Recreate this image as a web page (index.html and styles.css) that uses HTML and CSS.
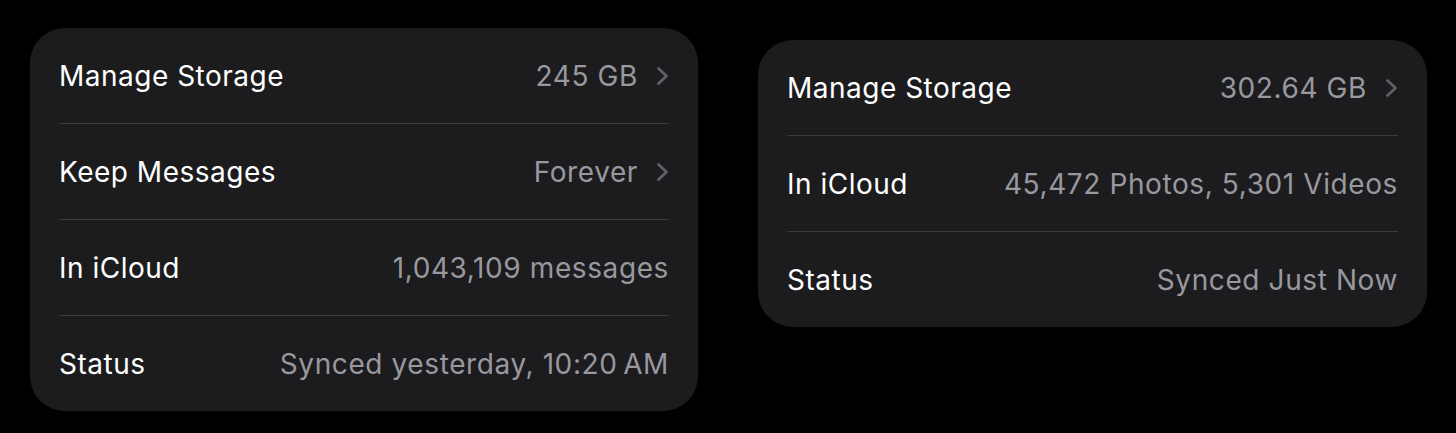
FILE: index.html
```html
<!DOCTYPE html>
<html lang="en">

<head>
    <meta charset="UTF-8">
    <title>iCloud Settings</title>
    <link rel="stylesheet" href="styles.css">
</head>

<body>
    <div class="page">
        <div class="card card-messages">
            <div class="row">
                <span class="label">Manage Storage</span>
                <span class="value">245 GB<span class="chevron"><svg width="13" height="20" viewBox="0 0 13 20"><path d="M2.5 2.5 L10.5 10 L2.5 17.5" fill="none" stroke="currentColor" stroke-width="2.7" stroke-linecap="round" stroke-linejoin="round"/></svg></span></span>
            </div>
            <div class="row">
                <span class="label">Keep Messages</span>
                <span class="value">Forever<span class="chevron"><svg width="13" height="20" viewBox="0 0 13 20"><path d="M2.5 2.5 L10.5 10 L2.5 17.5" fill="none" stroke="currentColor" stroke-width="2.7" stroke-linecap="round" stroke-linejoin="round"/></svg></span></span>
            </div>
            <div class="row">
                <span class="label">In iCloud</span>
                <span class="value">1,043,109 messages</span>
            </div>
            <div class="row">
                <span class="label">Status</span>
                <span class="value">Synced yesterday, 10:20&#8201;AM</span>
            </div>
        </div>

        <div class="card card-photos">
            <div class="row">
                <span class="label">Manage Storage</span>
                <span class="value">302.64 GB<span class="chevron"><svg width="13" height="20" viewBox="0 0 13 20"><path d="M2.5 2.5 L10.5 10 L2.5 17.5" fill="none" stroke="currentColor" stroke-width="2.7" stroke-linecap="round" stroke-linejoin="round"/></svg></span></span>
            </div>
            <div class="row">
                <span class="label">In iCloud</span>
                <span class="value">45,472 Photos, 5,301 Videos</span>
            </div>
            <div class="row">
                <span class="label">Status</span>
                <span class="value">Synced Just Now</span>
            </div>
        </div>
    </div>
</body>

</html>
```

FILE: styles.css
```css
body {
    margin: 0;
    background: #000;
    font-family: 'Inter', 'Noto Sans', sans-serif;
    -webkit-font-smoothing: antialiased;
}

.page {
    display: flex;
    align-items: flex-start;
    gap: 60px;
    padding: 28px 29px 0 30px;
}

.card {
    flex: 0 0 668px;
    background: #1c1c1e;
    border-radius: 35px;
    padding: 0 29px;
    box-sizing: border-box;
}

.card-photos {
    flex-basis: 669px;
    margin-top: 12px;
}

.row {
    display: flex;
    justify-content: space-between;
    align-items: center;
    height: 95px;
}

.row + .row {
    border-top: 1px solid #3a3a3c;
}

.label {
    color: #fff;
    font-size: 28px;
    letter-spacing: 0.5px;
}

.value {
    display: flex;
    align-items: center;
    color: #98989e;
    font-size: 28px;
    letter-spacing: 0.6px;
}

.chevron {
    display: flex;
    margin-left: 18px;
    color: #616166;
}
```
